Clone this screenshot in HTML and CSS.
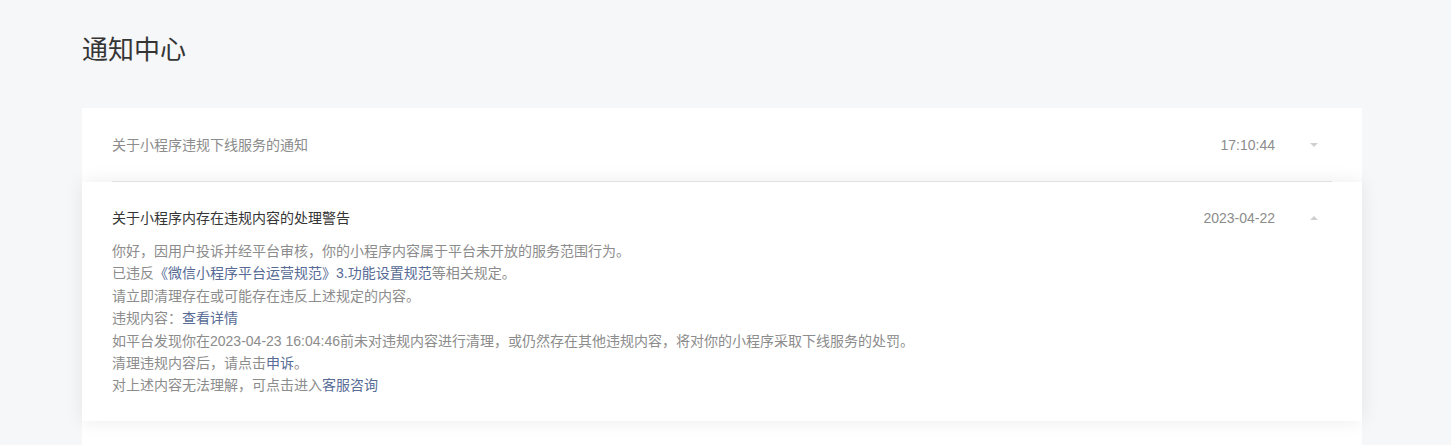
FILE: index.html
```html
<!DOCTYPE html>
<html lang="zh-CN">
	<head>
		<meta charset="UTF-8" />
		<meta name="viewport" content="width=device-width, initial-scale=1.0" />
		<title>通知中心</title>
		<link rel="stylesheet" href="styles.css">
	</head>
	<body>
		<main class="page">
			<h1 class="page-title">通知中心</h1>

			<!-- 通知列表 -->
			<ul class="notice-list">
				<li class="notice-item is-read">
					<div class="notice-item__inner">
						<div class="notice-item__head">
							<span class="notice-item__title">关于小程序违规下线服务的通知</span>
							<span class="notice-item__time">17:10:44</span>
							<span class="notice-item__arrow arrow-down"></span>
						</div>
					</div>
				</li>

				<li class="notice-item is-open">
					<div class="notice-item__inner">
						<div class="notice-item__head">
							<span class="notice-item__title">关于小程序内存在违规内容的处理警告</span>
							<span class="notice-item__time">2023-04-22</span>
							<span class="notice-item__arrow arrow-up"></span>
						</div>
						<div class="notice-item__body">
							<p>你好，因用户投诉并经平台审核，你的小程序内容属于平台未开放的服务范围行为。</p>
							<p>已违反<a href="#">《微信小程序平台运营规范》3.功能设置规范</a>等相关规定。</p>
							<p>请立即清理存在或可能存在违反上述规定的内容。</p>
							<p>违规内容：<a href="#">查看详情</a></p>
							<p>如平台发现你在2023-04-23 16:04:46前未对违规内容进行清理，或仍然存在其他违规内容，将对你的小程序采取下线服务的处罚。</p>
							<p>清理违规内容后，请点击<a href="#">申诉</a>。</p>
							<p>对上述内容无法理解，可点击进入<a href="#">客服咨询</a></p>
						</div>
					</div>
				</li>

				<li class="notice-item">
					<div class="notice-item__inner">
						<div class="notice-item__head">
							<span class="notice-item__title">关于小程序类目资质审核的通知</span>
							<span class="notice-item__time">2023-04-20</span>
							<span class="notice-item__arrow arrow-down"></span>
						</div>
					</div>
				</li>
			</ul>
		</main>
	</body>
</html>
```

FILE: styles.css
```css
body {
	margin: 0;
	background-color: #f6f7f9;
	font-family: "Liberation Sans", "Noto Sans CJK SC", sans-serif;
	color: #353535;
}

.page {
	padding: 34px 89px 0 82px;
}

.page-title {
	margin: 0 0 42px;
	font-size: 26px;
	line-height: 32px;
	font-weight: normal;
	color: #353535;
}

/* 通知列表 */
.notice-list {
	margin: 0;
	padding: 0;
	list-style: none;
	background-color: #fff;
	border-radius: 4px 4px 0 0;
}

.notice-item {
	background-color: #fff;
}

.notice-item__inner {
	margin: 0 30px;
	border-bottom: 1px solid #e7e9eb;
}

.notice-item.is-open {
	position: relative;
	z-index: 1;
	box-shadow: 0 0 18px rgba(0, 0, 0, 0.08);
}

.notice-item.is-open .notice-item__inner {
	border-bottom: none;
	padding-bottom: 24px;
}

.notice-item__head {
	display: flex;
	align-items: center;
	padding: 26px 0 25px;
	font-size: 14px;
	line-height: 22px;
}

.notice-item.is-open .notice-item__head {
	padding: 25px 0 11px;
}

.notice-item__title {
	flex: 1;
	color: #353535;
}

.notice-item.is-read .notice-item__title {
	color: #8c8c8c;
}

.notice-item__time {
	color: #8c8c8c;
}

.notice-item__arrow {
	width: 0;
	height: 0;
	margin: 0 14px 0 35px;
	border-left: 4px solid transparent;
	border-right: 4px solid transparent;
}

.arrow-down {
	border-top: 4px solid #cfcfcf;
}

.arrow-up {
	border-bottom: 4px solid #cfcfcf;
}

.notice-item__body {
	font-size: 14px;
	line-height: 22.4px;
	color: #8c8c8c;
}

.notice-item__body p {
	margin: 0;
}

.notice-item__body a {
	color: #576b95;
	text-decoration: none;
}
```
